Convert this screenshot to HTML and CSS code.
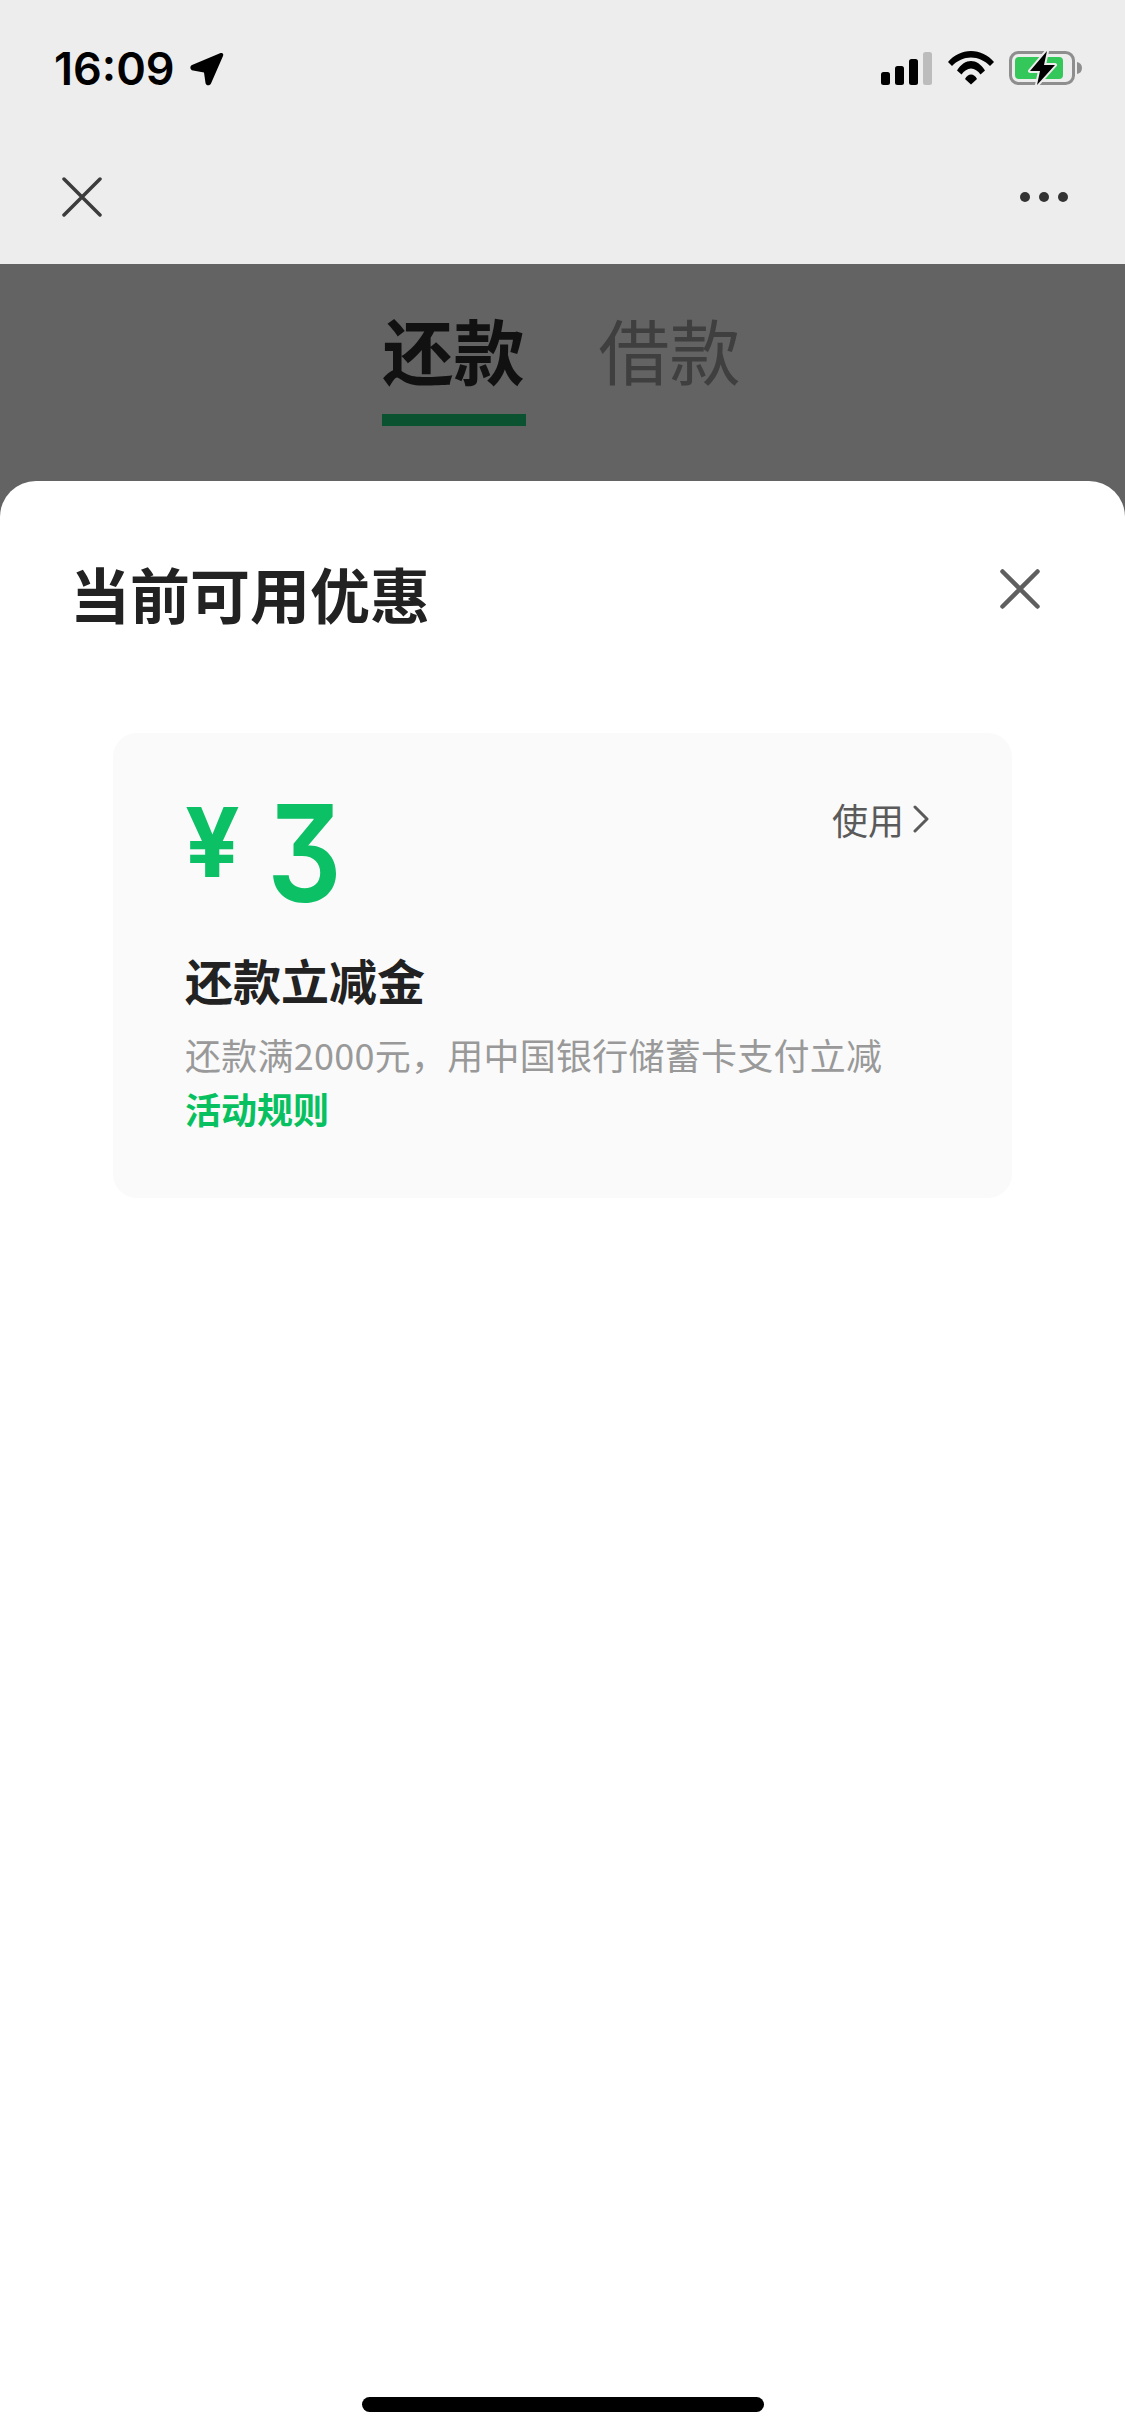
FILE: index.html
```html
<!doctype html>
<html lang="zh-CN">
<head>
    <meta charset="UTF-8">
    <meta name="viewport" content="width=device-width, initial-scale=1.0">
    <title>当前可用优惠</title>
    <link rel="stylesheet" href="styles.css">
</head>
<body>
<div class="page">
    <header class="top">
        <div class="status">
            <div class="status-left">
                <span class="time">16:09</span>
                <svg class="arrow" width="36" height="36" viewBox="0 0 36 36">
                    <path d="M3 14 31 2.200C33.500 1.200 35 2.800 34 5L22 32.500C21 35 17 35 16.500 32L15 21.500 4 19.500C.8 19 .6 15 3 14z" fill="#000"/>
                </svg>
            </div>
            <div class="status-right">
                <svg width="52" height="33" viewBox="0 0 52 33">
                    <rect x="0" y="20" width="9" height="13" rx="2.500" fill="#000"/>
                    <rect x="14" y="14" width="9" height="19" rx="2.500" fill="#000"/>
                    <rect x="28" y="7" width="9" height="26" rx="2.500" fill="#000"/>
                    <rect x="42" y="0" width="9" height="33" rx="2.500" fill="#bcbcbc"/>
                </svg>
                <svg width="46" height="34" viewBox="0 0 46 34">
                    <path d="M0 11C6 4 14 0 23 0S40 4 46 11L42 15C36.500 9.500 30 6.500 23 6.500S9.500 9.500 4 15z" fill="#000"/>
                    <path d="M9 19.500C13 13 18 10 23 10S33 13 37 19.500L32.500 23.500C30 20 26.500 17.500 23 17.500S16 20 13.500 23.500z" fill="#000"/>
                    <path d="M17 28C18.500 25 20.500 23.500 23 23.500S27.500 25 29 28L23 33.500z" fill="#000"/>
                </svg>
                <svg width="74" height="34" viewBox="0 0 74 34">
                    <rect x="1.500" y="1.500" width="63" height="31" rx="8" fill="none" stroke="#8e8e8e" stroke-width="3"/>
                    <path d="M68 11c3 .5 5 2.500 5 6s-2 5.500-5 6z" fill="#8e8e8e"/>
                    <rect x="6" y="6" width="48" height="22" rx="4" fill="#34c759"/>
                    <path d="M38 0 21 20H31L28 34 46 14H35z" fill="#000" stroke="#ededed" stroke-width="4" paint-order="stroke" stroke-linejoin="round"/>
                </svg>
            </div>
        </div>
        <nav class="nav">
            <svg width="40" height="40" viewBox="0 0 40 40">
                <path d="M2 2 38 38M38 2 2 38" stroke="#3c3c3c" stroke-width="3.500" stroke-linecap="round"/>
            </svg>
            <div class="dots"><i></i><i></i><i></i></div>
        </nav>
    </header>

    <div class="tabs">
        <div class="tab active">还款</div>
        <div class="tab">借款</div>
    </div>

    <section class="sheet">
        <div class="sheet-head">
            <h2 class="sheet-title">当前可用优惠</h2>
            <svg class="sheet-close" width="40" height="40" viewBox="0 0 40 40">
                <path d="M2.500 2.500 37.500 37.500M37.500 2.500 2.500 37.500" stroke="#5f5f5f" stroke-width="4.500" stroke-linecap="round"/>
            </svg>
        </div>

        <div class="card">
            <div class="card-top">
                <div class="amount">
                    <span class="yen">¥</span>
                    <span class="num">3</span>
                </div>
                <div class="use">
                    <span>使用</span>
                    <svg width="16" height="28" viewBox="0 0 16 28">
                        <path d="M2 2 14 14 2 26" fill="none" stroke="#5a5a5a" stroke-width="3" stroke-linecap="round" stroke-linejoin="round"/>
                    </svg>
                </div>
            </div>
            <div class="card-name">还款立减金</div>
            <p class="card-desc">还款满2000元，用中国银行储蓄卡支付立减</p>
            <a class="card-rule">活动规则</a>
        </div>

        <div class="home-bar"></div>
    </section>
</div>
</body>
</html>
```

FILE: styles.css
```css
html * {
    margin: 0;
    padding: 0;
    box-sizing: border-box;
}

body {
    background-color: #fff;
    font-family: "Noto Sans CJK SC", "Noto Sans", sans-serif;
    overflow: hidden;
}

.page {
    display: flex;
    flex-direction: column;
    width: 1125px;
    height: 2436px;
    background-color: #636363;
}

.top {
    height: 264px;
    background-color: #ededed;
}

.status {
    display: flex;
    justify-content: space-between;
    align-items: flex-start;
    height: 177px;
    padding: 50px 42px 0 54px;
}

.status-left {
    display: flex;
    align-items: center;
    gap: 14px;
    height: 38px;
}

.time {
    font-family: "Inter", sans-serif;
    font-size: 45px;
    font-weight: 600;
    line-height: 38px;
    color: #000;
}

.status-right {
    display: flex;
    align-items: center;
    gap: 15px;
    height: 36px;
}

.nav {
    display: flex;
    justify-content: space-between;
    align-items: center;
    height: 40px;
    padding: 0 57px 0 62px;
}

.dots {
    display: flex;
    gap: 9px;
}

.dots i {
    display: block;
    width: 10px;
    height: 10px;
    border-radius: 100%;
    background-color: #333;
}

.tabs {
    display: flex;
    justify-content: center;
    gap: 72px;
    height: 217px;
    padding-top: 40px;
    padding-right: 2px;
}

.tab {
    width: 144px;
    height: 122px;
    font-size: 71px;
    font-weight: 400;
    line-height: 89px;
    text-align: center;
    color: #3f3f3f;
}

.tab.active {
    font-weight: 700;
    color: #111;
    border-bottom: 12px solid #0a5230;
}

.sheet {
    display: flex;
    flex-direction: column;
    flex: 1;
    border-radius: 36px 36px 0 0;
    background-color: #fff;
}

.sheet-head {
    display: flex;
    justify-content: space-between;
    align-items: flex-start;
    height: 252px;
    padding: 72px 85px 0 70px;
}

.sheet-title {
    font-size: 60px;
    font-weight: 700;
    line-height: 80px;
    color: #222;
}

.sheet-close {
    margin-top: 16px;
}

.card {
    height: 465px;
    margin: 0 113px;
    padding: 60px 0 0 72px;
    border-radius: 24px;
    background-color: #fafafa;
}

.card-top {
    display: flex;
    justify-content: space-between;
    height: 154px;
    padding-right: 83px;
}

.amount {
    display: flex;
    align-items: flex-start;
    color: #0cc066;
}

.yen {
    width: 82px;
    font-family: "Inter", sans-serif;
    font-size: 96px;
    font-weight: 700;
    line-height: 98px;
}

.num {
    font-family: "Inter", sans-serif;
    font-size: 135px;
    font-weight: 600;
    line-height: 120px;
    font-feature-settings: "cv09", "ss01";
    transform: scaleX(.87);
    transform-origin: left;
}

.use {
    display: flex;
    align-items: center;
    gap: 9px;
    height: 50px;
    margin-top: 1px;
    font-size: 36px;
    color: #5a5a5a;
}

.card-name {
    font-size: 48px;
    font-weight: 700;
    line-height: 64px;
    color: #222;
}

.card-desc {
    margin-top: 16px;
    font-size: 36px;
    line-height: 54px;
    letter-spacing: .25px;
    white-space: nowrap;
    color: #999;
}

.card-rule {
    display: block;
    font-size: 36px;
    font-weight: 700;
    line-height: 55px;
    color: #07c160;
}

.home-bar {
    width: 402px;
    height: 15px;
    margin: auto auto 24px;
    border-radius: 8px;
    background-color: #000;
}
```
